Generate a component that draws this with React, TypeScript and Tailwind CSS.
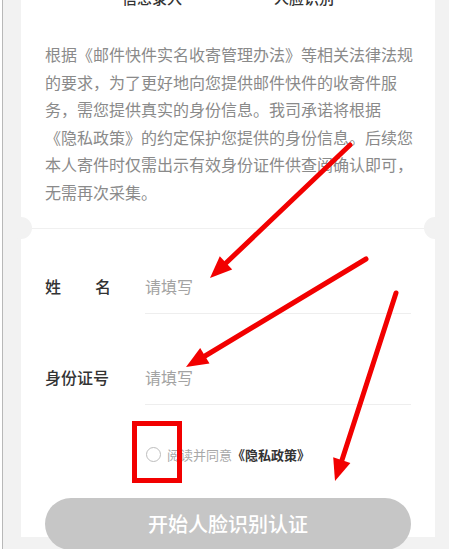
import React from "react";

export default function App() {
  return (
    <div className="relative w-[449px] h-[549px] overflow-hidden bg-white font-['Noto_Sans_CJK_SC','Liberation_Sans',sans-serif]">
      <div className="flex h-full">
        <div className="w-[2px] bg-white" />
        <div className="w-px bg-[#b8b8b8]" />
        <div className="flex-1 bg-[#f2f2f2] pl-[18px]">
          <div className="relative w-[414px] h-full bg-white">
            {/* tabs */}
            <div className="mt-[-12px] flex pl-[101px] gap-[92px] text-[15px] leading-[20px] font-medium text-[#333]">
              <span>信息录入</span>
              <span>人脸识别</span>
            </div>
            {/* paragraph */}
            <p className="pt-[33px] pl-[24px] pr-[20px] text-[16px] leading-[27.6px] text-[#8a8a8a]">
              根据《邮件快件实名收寄管理办法》等相关法律法规
              <br />
              的要求，为了更好地向您提供邮件快件的收寄件服
              <br />
              务，需您提供真实的身份信息。我司承诺将根据
              <br />
              《隐私政策》的约定保护您提供的身份信息。后续您
              <br />
              本人寄件时仅需出示有效身份证件供查阅确认即可，
              <br />
              无需再次采集。
            </p>
            {/* divider */}
            <div className="mt-[21px] border-t border-[#f0f0f0]" />
            {/* form */}
            <div className="pt-[27px] pl-[24px] pr-[24px]">
              <div className="flex">
                <div className="w-[100px] pt-[18px] text-[16px] leading-[24px] font-medium text-[#333] flex">
                  <span>姓</span>
                  <span className="ml-[34px]">名</span>
                </div>
                <div className="flex-1 pt-[18px] pb-[15px] border-b border-[#eeeeee] text-[16px] leading-[24px] text-[#a3a3a3]">
                  请填写
                </div>
              </div>
              <div className="flex">
                <div className="w-[100px] pt-[51px] text-[16px] leading-[24px] font-medium text-[#333]">
                  身份证号
                </div>
                <div className="flex-1 pt-[51px] pb-[15px] border-b border-[#eeeeee] text-[16px] leading-[24px] text-[#a3a3a3]">
                  请填写
                </div>
              </div>
            </div>
            {/* agreement */}
            <div className="mt-[40px] flex items-center justify-center h-[20px] text-[13px] leading-[20px]">
              <span className="w-[15px] h-[15px] rounded-full border border-[#bdbdbd] mr-[6px]" />
              <span className="text-[#a8a8a8]">阅读并同意</span>
              <span className="font-bold text-[#333]">《隐私政策》</span>
            </div>
            {/* button */}
            <div className="mt-[33px] mx-[24px] h-[52px] rounded-full bg-[#c6c6c6] flex items-center justify-center text-white text-[20px] font-medium">
              开始人脸识别认证
            </div>
          </div>
        </div>
      </div>

      {/* notches */}
      <div className="absolute left-[10px] top-[217px] w-[22px] h-[22px] rounded-full bg-[#f2f2f2]" />
      <div className="absolute left-[424px] top-[217px] w-[22px] h-[22px] rounded-full bg-[#f2f2f2]" />

      {/* red annotation box */}
      <div className="absolute left-[132px] top-[421px] w-[50px] h-[62px] border-[5px] border-[#f20000]" />

      {/* red arrows */}
      <svg className="absolute inset-0" width="449" height="549" viewBox="0 0 449 549">
        <g stroke="#f20000" strokeWidth="5" strokeLinecap="round" fill="#f20000">
          <line x1="350" y1="145" x2="226" y2="263" />
          <line x1="366" y1="259" x2="205" y2="356" />
          <line x1="396" y1="293" x2="342" y2="460" />
        </g>
        <g fill="#f20000">
          <polygon points="210,278 232.2,269.4 219.8,256.3" />
          <polygon points="186,367 209.5,363.4 200.2,348" />
          <polygon points="335,481 350.4,462.9 333.2,457.3" />
        </g>
      </svg>
    </div>
  );
}
